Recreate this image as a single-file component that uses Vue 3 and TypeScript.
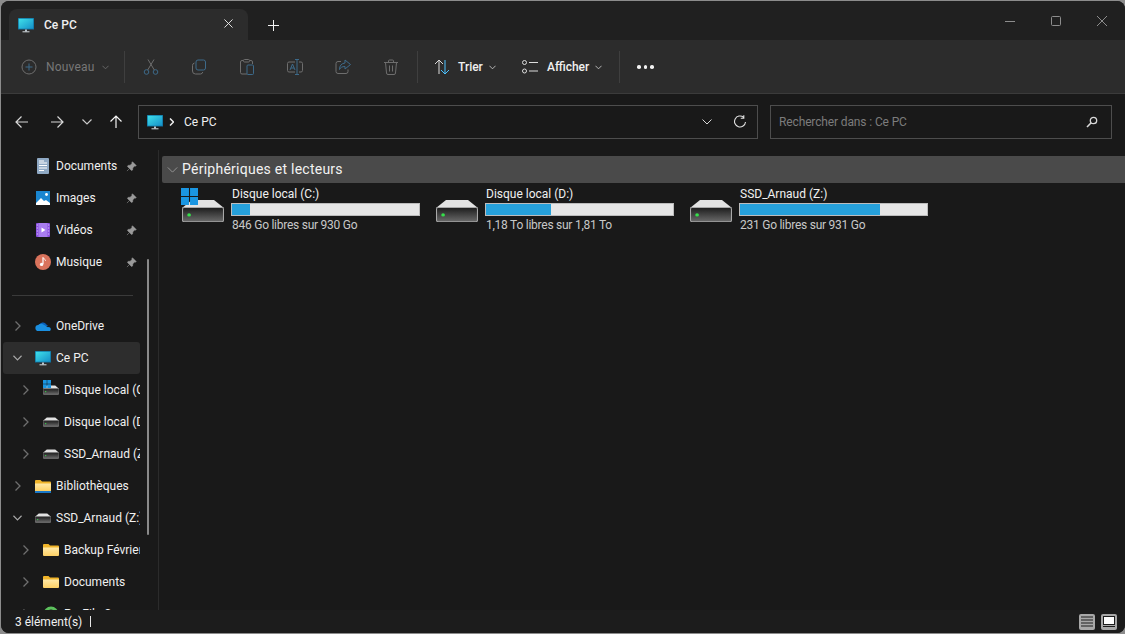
<template>
  <div class="desk">
    <svg class="defs" width="0" height="0">
      <defs>
        <linearGradient id="screen" x1="0" y1="0" x2="1" y2="1">
          <stop offset="0" stop-color="#3fe0ea" />
          <stop offset="1" stop-color="#1590c8" />
        </linearGradient>
        <linearGradient id="driveFront" x1="0" y1="0" x2="0" y2="1">
          <stop offset="0" stop-color="#1c1c1c" />
          <stop offset="1" stop-color="#6a6a6a" />
        </linearGradient>
        <linearGradient id="folder" x1="0" y1="0" x2="0" y2="1">
          <stop offset="0" stop-color="#ffe9a8" />
          <stop offset="1" stop-color="#fdd063" />
        </linearGradient>
        <symbol id="i-monitor" viewBox="0 0 16 16">
          <rect x="0" y="1" width="16" height="11.5" fill="#0e6f9e" />
          <rect x=".7" y="1.7" width="14.6" height="10" fill="url(#screen)" />
          <rect x="7" y="12.5" width="2" height="2" fill="#b8c4cc" />
          <rect x="4.5" y="14.3" width="7" height="1" fill="#d4dade" />
        </symbol>
        <symbol id="i-doc" viewBox="0 0 16 16">
          <rect x="2" y="0" width="12" height="16" rx="1" fill="#8fa9c4" />
          <path d="M4 3h5M4 5h8M4 7.5h8M4 10h8M4 12.5h5" stroke="#fff" stroke-width="1" />
        </symbol>
        <symbol id="i-image" viewBox="0 0 16 16">
          <rect x="1" y="1" width="14" height="14" fill="#1a86d0" />
          <path d="M1 13l5-5 3 3 2-1 4 3v2H1z" fill="#fff" />
          <circle cx="11.5" cy="4.5" r="1.4" fill="#fff" />
        </symbol>
        <symbol id="i-video" viewBox="0 0 16 16">
          <rect x="1" y="1" width="14" height="14" rx="1" fill="#8a4fe0" />
          <rect x="3.5" y="1" width="9" height="14" fill="#a97cf0" />
          <path d="M6.5 5.5l4 2.5-4 2.5z" fill="#fff" />
          <path d="M1.8 3h1M1.8 6h1M1.8 9h1M1.8 12h1M13.2 3h1M13.2 6h1M13.2 9h1M13.2 12h1" stroke="#e8dcff" stroke-width="1" />
        </symbol>
        <symbol id="i-music" viewBox="0 0 16 16">
          <circle cx="8" cy="8" r="8" fill="#d9735c" />
          <path d="M8 3.5v6.5" stroke="#fff" stroke-width="1.2" />
          <path d="M8 3.5c.5 1.5 2.5 1.5 2.5 3.2" stroke="#fff" stroke-width="1" fill="none" />
          <circle cx="6.6" cy="10.4" r="1.7" fill="#fff" />
        </symbol>
        <symbol id="i-cloud" viewBox="0 0 16 16">
          <path d="M4 8a4 4 0 0 1 7.4-1.6A3 3 0 0 1 13 8z" fill="#0a5fb8" />
          <path d="M3.6 13a3 3 0 0 1-.4-6 4 4 0 0 1 5.2-.4L13 9.200a2.200 2.200 0 0 1 2.800 2.300c0 .9-.7 1.500-1.600 1.500z" fill="#1a8fe0" />
        </symbol>
        <symbol id="i-drive" viewBox="0 0 16 16">
          <path d="M3.800 3.500h8.400L16 6.800H0z" fill="#e2e2e2" />
          <rect x=".2" y="6.600" width="15.600" height="5.800" rx=".6" fill="url(#driveFront)" stroke="#a8a8a8" stroke-width=".4" />
          <circle cx="2.700" cy="9.600" r=".7" fill="#35e04a" />
        </symbol>
        <symbol id="i-win" viewBox="0 0 16 16">
          <path d="M0 0h7.500v7.500H0zM8.500 0H16v7.500H8.500zM0 8.500h7.500V16H0zM8.500 8.500H16V16H8.500z" fill="#1a96e2" />
        </symbol>
        <symbol id="i-folder" viewBox="0 0 16 16">
          <path d="M0 3a1 1 0 0 1 1-1h4.500L7 3.500h8a1 1 0 0 1 1 1V8H0z" fill="#f0b429" />
          <path d="M0 5.500h16V13a1 1 0 0 1-1 1H1a1 1 0 0 1-1-1z" fill="url(#folder)" />
        </symbol>
        <symbol id="i-library" viewBox="0 0 16 16">
          <path d="M0 3a1 1 0 0 1 1-1h4.500L7 3.500h8a1 1 0 0 1 1 1V8H0z" fill="#f0b429" />
          <path d="M0 5.500h16V13H0z" fill="url(#folder)" />
          <rect x="0" y="13" width="16" height="2" fill="#1a78c8" />
        </symbol>
        <symbol id="i-gear" viewBox="0 0 16 16">
          <circle cx="8" cy="8" r="6" fill="none" stroke="#5cc05c" stroke-width="3" />
        </symbol>
      </defs>
    </svg>

    <div class="window">
      <header class="titlebar">
        <div class="tab">
          <svg class="ic16"><use href="#i-monitor" /></svg>
          <span class="tab-title">Ce PC</span>
          <svg class="tab-close" viewBox="0 0 10 10"><path d="M.5.500l9 9M9.500.500l-9 9" stroke="#f2f2f2" fill="none" /></svg>
        </div>
        <svg class="tab-add" viewBox="0 0 11 11"><path d="M5.500 0v11M0 5.500h11" stroke="#f2f2f2" fill="none" /></svg>
        <div class="win-controls">
          <svg viewBox="0 0 10 10"><path d="M0 5.500h10" stroke="#8d8d8d" fill="none" /></svg>
          <svg viewBox="0 0 10 10"><rect x=".5" y=".500" width="9" height="9" rx="1" stroke="#8d8d8d" fill="none" /></svg>
          <svg viewBox="0 0 10 10"><path d="M0 0l10 10M10 0L0 10" stroke="#8d8d8d" fill="none" /></svg>
        </div>
      </header>

      <div class="toolbar">
        <div class="tool new">
          <svg class="ic16" viewBox="0 0 16 16">
            <circle cx="8" cy="8" r="7" fill="none" stroke="#6e6e6e" />
            <path d="M8 4.500v7M4.500 8h7" stroke="#3d6a8a" fill="none" />
          </svg>
          <span>Nouveau</span>
          <svg class="chev" viewBox="0 0 8 5"><path d="M.5.500L4 4 7.500.500" stroke="#6e6e6e" fill="none" /></svg>
        </div>
        <i class="sep"></i>
        <div class="icon-tools">
          <div class="icon-tool">
            <svg class="ic16" viewBox="0 0 16 16">
              <circle cx="3.500" cy="13" r="2.300" fill="none" stroke="#3d6a8a" />
              <circle cx="12.500" cy="13" r="2.300" fill="none" stroke="#3d6a8a" />
              <path d="M4.700 11L11 .5M11.300 11L5 .5" stroke="#6e6e6e" fill="none" />
            </svg>
          </div>
          <div class="icon-tool">
            <svg class="ic16" viewBox="0 0 16 16">
              <rect x="5" y="1" width="9.500" height="10" rx="2" fill="none" stroke="#3d6a8a" />
              <path d="M3.500 4A2.500 2.500 0 0 0 1.500 6.500V12a3 3 0 0 0 3 3h5a2.500 2.500 0 0 0 2.300-2" stroke="#6e6e6e" fill="none" />
            </svg>
          </div>
          <div class="icon-tool">
            <svg class="ic16" viewBox="0 0 16 16">
              <path d="M8 15H3a1.500 1.500 0 0 1-1.500-1.500V3A1.500 1.500 0 0 1 3 1.500h1M11 1.500h1A1.500 1.500 0 0 1 13.500 3v2" stroke="#6e6e6e" fill="none" />
              <rect x="4.500" y=".5" width="6" height="2.500" rx="1" stroke="#6e6e6e" fill="none" />
              <rect x="8" y="6" width="6.500" height="9.500" rx="1" stroke="#3d6a8a" fill="none" />
            </svg>
          </div>
          <div class="icon-tool">
            <svg class="ic16" viewBox="0 0 16 16">
              <path d="M8 3H2a1.500 1.500 0 0 0-1.500 1.500v7A1.500 1.500 0 0 0 2 13h6M12 3h2a1.500 1.500 0 0 1 1.500 1.500v7A1.500 1.500 0 0 1 14 13h-2" stroke="#6e6e6e" fill="none" />
              <path d="M10 .5v15M8 .5h4M8 15.500h4" stroke="#3d6a8a" fill="none" />
              <path d="M3 11l2.500-6L8 11M4 9h3" stroke="#3d6a8a" fill="none" />
            </svg>
          </div>
          <div class="icon-tool">
            <svg class="ic16" viewBox="0 0 16 16">
              <path d="M6 2.500H3A2 2 0 0 0 1 4.500v8a2 2 0 0 0 2 2h8a2 2 0 0 0 2-2v-2" stroke="#6e6e6e" fill="none" />
              <path d="M10 1l5.500 4.500L10 10V7.500c-3 0-4.500 1-5.500 3 0-4 2-6 5.500-6.500z" stroke="#3d6a8a" fill="none" />
            </svg>
          </div>
          <div class="icon-tool">
            <svg class="ic16" viewBox="0 0 16 16">
              <path d="M1 3.500h14M5.500 3.500V2A1 1 0 0 1 6.500 1h3a1 1 0 0 1 1 1v1.500M2.500 3.500l1 10.500a1.500 1.500 0 0 0 1.500 1.500h6a1.500 1.500 0 0 0 1.500-1.500l1-10.500M6.500 6.500v6M9.500 6.500v6" stroke="#6e6e6e" fill="none" />
            </svg>
          </div>
        </div>
        <i class="sep"></i>
        <div class="tool sort">
          <svg class="ic16" viewBox="0 0 16 16">
            <path d="M5 15V1M1 5l4-4 4 4" stroke="#dcdcdc" fill="none" />
            <path d="M11 1v14M7 11l4 4 4-4" stroke="#4cc2ff" fill="none" />
          </svg>
          <span>Trier</span>
          <svg class="chev" viewBox="0 0 8 5"><path d="M.5.500L4 4 7.500.500" stroke="#c8c8c8" fill="none" /></svg>
        </div>
        <div class="tool view">
          <svg class="ic16" viewBox="0 0 16 16">
            <circle cx="2.500" cy="3.500" r="2" stroke="#dcdcdc" fill="none" />
            <circle cx="2.500" cy="12" r="2" stroke="#dcdcdc" fill="none" />
            <path d="M7 3.500h9M7 12h9" stroke="#dcdcdc" fill="none" />
          </svg>
          <span>Afficher</span>
          <svg class="chev" viewBox="0 0 8 5"><path d="M.5.500L4 4 7.500.500" stroke="#c8c8c8" fill="none" /></svg>
        </div>
        <i class="sep"></i>
        <div class="dots"><b></b><b></b><b></b></div>
      </div>

      <nav class="navbar">
        <div class="nav-btns">
          <svg viewBox="0 0 14 14"><path d="M13 7H1M6.500 1.500L1 7l5.500 5.500" stroke="#d8d8d8" stroke-width="1.200" fill="none" /></svg>
          <svg viewBox="0 0 14 14"><path d="M1 7h12M7.500 1.500L13 7l-5.500 5.500" stroke="#d8d8d8" stroke-width="1.200" fill="none" /></svg>
          <svg class="nav-small" viewBox="0 0 10 6"><path d="M.5.500L5 5 9.500.500" stroke="#c8c8c8" stroke-width="1.200" fill="none" /></svg>
          <svg viewBox="0 0 14 14"><path d="M7 13V1M1.500 6.500L7 1l5.500 5.500" stroke="#f4f4f4" stroke-width="1.200" fill="none" /></svg>
        </div>
        <div class="address">
          <svg class="ic16"><use href="#i-monitor" /></svg>
          <svg class="crumb" viewBox="0 0 5 8"><path d="M1 .5L4.500 4 1 7.500" stroke="#f0f0f0" stroke-width="1.500" fill="none" /></svg>
          <span class="addr-text">Ce PC</span>
          <svg class="addr-chev" viewBox="0 0 10 6"><path d="M.5.500L5 5 9.500.500" stroke="#d8d8d8" fill="none" /></svg>
          <svg class="addr-refresh" viewBox="0 0 14 14"><path d="M10.500 2.200A5.500 5.500 0 1 0 12.500 7M10.800 .2v3h-3" stroke="#e2e2e2" stroke-width="1.100" fill="none" /></svg>
        </div>
        <div class="search">
          <span>Rechercher dans : Ce PC</span>
          <svg viewBox="0 0 12 12"><circle cx="7.500" cy="4.500" r="3.200" stroke="#d8d8d8" stroke-width="1.300" fill="none" /><path d="M5.200 6.800L1 11" stroke="#d8d8d8" stroke-width="1.600" fill="none" /></svg>
        </div>
      </nav>

      <div class="body">
        <aside class="sidebar">
          <template v-for="row in navRows" :key="row.key">
            <div v-if="row.divider" class="side-div"></div>
            <div v-else class="side-row" :class="{ selected: row.selected, child: row.child, pinned: row.pin }">
              <span class="side-chev">
                <svg v-if="row.open" class="chev-open" viewBox="0 0 10 6"><path d="M.5.500L5 5 9.500.500" stroke="#a8a8a8" stroke-width="1.300" fill="none" /></svg>
                <svg v-else-if="row.chev" class="chev-closed" viewBox="0 0 6 10"><path d="M.5.500L5 5 .5 9.500" stroke="#6f6f6f" stroke-width="1.300" fill="none" /></svg>
              </span>
              <span class="side-icon">
                <svg class="ic16"><use :href="'#i-' + row.icon" /></svg>
                <svg v-if="row.win" class="side-win"><use href="#i-win" /></svg>
              </span>
              <span class="side-label">{{ row.label }}</span>
              <svg v-if="row.pin" class="pin" viewBox="0 0 12 12"><path d="M7 .8l4.200 4.200-1 .6-.8-.2L7.400 7.500 7.200 9.800 6 10.400 1.600 6l.6-1.200 2.300-.2 2.100-2-.2-.8zM3.500 8.500L1 11" fill="#9a9a9a" stroke="#9a9a9a" stroke-width=".6" /></svg>
            </div>
          </template>
          <div class="side-thumb"></div>
        </aside>

        <main class="content">
          <div class="group-head">
            <svg viewBox="0 0 12 7"><path d="M.5.500L6 6 11.500.500" stroke="#9e9e9e" fill="none" /></svg>
            <span>Périphériques et lecteurs</span>
          </div>
          <div class="tiles">
            <div v-for="d in drives" :key="d.name" class="tile">
              <div class="tile-icon">
                <svg class="drive-big" viewBox="0 3.500 16 9" preserveAspectRatio="none"><use href="#i-drive" width="16" height="16" /></svg>
                <svg v-if="d.win" class="drive-win"><use href="#i-win" /></svg>
              </div>
              <div class="tile-info">
                <div class="tile-name">{{ d.name }}</div>
                <div class="bar"><div class="bar-fill" :style="{ width: d.used + '%' }"></div></div>
                <div class="tile-free">{{ d.free }}</div>
              </div>
            </div>
          </div>
        </main>
      </div>

      <footer class="status">
        <span>3 élément(s)</span>
        <i class="status-sep"></i>
        <div class="status-views">
          <div class="view-btn">
            <svg viewBox="0 0 12 10"><path d="M0 .5h12M0 3.500h12M0 6.500h12M0 9.500h12" stroke="#1c1c1c" fill="none" /></svg>
          </div>
          <div class="view-btn">
            <svg viewBox="0 0 12 11"><rect x=".5" y=".5" width="11" height="8" fill="#fff" stroke="#1c1c1c" /><path d="M0 10.500h12" stroke="#1c1c1c" /></svg>
          </div>
        </div>
      </footer>
    </div>
  </div>
</template>

<script setup lang="ts">
interface NavRow {
  key: string
  label?: string
  icon?: string
  chev?: boolean
  open?: boolean
  pin?: boolean
  child?: boolean
  selected?: boolean
  win?: boolean
  divider?: boolean
}

interface Drive {
  name: string
  free: string
  used: number
  win?: boolean
}

const navRows: NavRow[] = [
  { key: 'docs', label: 'Documents', icon: 'doc', pin: true },
  { key: 'img', label: 'Images', icon: 'image', pin: true },
  { key: 'vid', label: 'Vidéos', icon: 'video', pin: true },
  { key: 'mus', label: 'Musique', icon: 'music', pin: true },
  { key: 'div', divider: true },
  { key: 'one', label: 'OneDrive', icon: 'cloud', chev: true },
  { key: 'pc', label: 'Ce PC', icon: 'monitor', open: true, selected: true },
  { key: 'c', label: 'Disque local (C:)', icon: 'drive', chev: true, child: true, win: true },
  { key: 'd', label: 'Disque local (D:)', icon: 'drive', chev: true, child: true },
  { key: 'z', label: 'SSD_Arnaud (Z:)', icon: 'drive', chev: true, child: true },
  { key: 'lib', label: 'Bibliothèques', icon: 'library', chev: true },
  { key: 'ssd', label: 'SSD_Arnaud (Z:)', icon: 'drive', open: true },
  { key: 'bak', label: 'Backup Février', icon: 'folder', chev: true, child: true },
  { key: 'doc2', label: 'Documents', icon: 'folder', chev: true, child: true },
  { key: 'pro', label: 'ProFile Sync', icon: 'gear', chev: true, child: true }
]

const drives: Drive[] = [
  { name: 'Disque local (C:)', free: '846 Go libres sur 930 Go', used: 9.5, win: true },
  { name: 'Disque local (D:)', free: '1,18 To libres sur 1,81 To', used: 35 },
  { name: 'SSD_Arnaud (Z:)', free: '231 Go libres sur 931 Go', used: 75 }
]
</script>

<style>
html,
body {
  margin: 0;
  background: #8c8c8c;
}
</style>

<style scoped>
.desk {
  width: 1125px;
  height: 634px;
  padding: 1px 0 1px 1px;
  box-sizing: border-box;
  overflow: hidden;
  position: relative;
  font-family: Roboto, "Noto Sans", sans-serif;
  font-size: 12px;
  color: #f0f0f0;
}

.defs {
  position: absolute;
}

.window {
  height: 100%;
  display: flex;
  flex-direction: column;
  background: #191919;
  border-radius: 8px;
  overflow: hidden;
}

.ic16 {
  width: 16px;
  height: 16px;
  flex: none;
}

.chev {
  width: 7px;
  height: 5px;
  flex: none;
}

/* title bar */
.titlebar {
  height: 39px;
  flex: none;
  background: #202020;
  display: flex;
  align-items: flex-end;
  padding-left: 8px;
}

.tab {
  width: 239px;
  height: 31px;
  box-sizing: border-box;
  background: #2c2c2c;
  border-radius: 8px 8px 0 0;
  display: flex;
  align-items: center;
  padding: 0 15px 0 9px;
}

.tab-title {
  margin-left: 10px;
  font-weight: 500;
  flex: 1;
}

.tab-close {
  width: 9px;
  height: 9px;
  margin-top: -3px;
}

.tab-add {
  width: 11px;
  height: 11px;
  margin: 0 0 9px 20px;
}

.win-controls {
  margin-left: auto;
  align-self: flex-start;
  display: flex;
  gap: 36px;
  padding: 15px 18px 0 0;
}

.win-controls svg {
  width: 10px;
  height: 10px;
}

/* toolbar */
.toolbar {
  height: 54px;
  flex: none;
  box-sizing: border-box;
  background: #2c2c2c;
  border-bottom: 1px solid #3b3b3b;
  display: flex;
  align-items: center;
  padding: 1px 0 0 20px;
}

.sep {
  width: 1px;
  height: 32px;
  background: #3f3f3f;
  flex: none;
}

.tool {
  display: flex;
  align-items: center;
}

.new {
  width: 103px;
  color: #777;
}

.new span {
  margin: 0 7px 0 9px;
  letter-spacing: 0.2px;
}

.icon-tools {
  display: flex;
  margin: 0 2px;
}

.icon-tool {
  width: 48px;
  display: flex;
  justify-content: center;
}

.sort {
  margin-left: 16px;
  width: 88px;
}

.sort span,
.view span {
  margin: 0 6px 0 8px;
  font-weight: 500;
}

.view {
  width: 97px;
}

.view span {
  margin-left: 9px;
}

.dots {
  display: flex;
  gap: 3px;
  margin-left: 17px;
}

.dots b {
  width: 3.5px;
  height: 3.5px;
  border-radius: 50%;
  background: #f2f2f2;
}

/* nav bar */
.navbar {
  height: 56px;
  flex: none;
  display: flex;
  align-items: flex-start;
  padding-top: 11px;
  box-sizing: border-box;
}

.nav-btns {
  width: 137px;
  height: 33px;
  flex: none;
  box-sizing: border-box;
  padding-left: 14px;
  display: flex;
  align-items: center;
}

.nav-btns svg {
  width: 14px;
  height: 14px;
  flex: none;
}

.nav-btns svg:nth-child(1) {
  margin-right: 21px;
}

.nav-btns svg:nth-child(2) {
  margin-right: 18px;
}

.nav-btns .nav-small {
  width: 10px;
  height: 6px;
  margin-right: 17px;
}

.address {
  width: 620px;
  height: 34px;
  box-sizing: border-box;
  border: 1px solid #4d4d4d;
  display: flex;
  align-items: center;
  padding: 0 10px 0 8px;
}

.crumb {
  width: 5px;
  height: 8px;
  margin: 0 0 0 6px;
}

.addr-text {
  margin-left: 10px;
  flex: 1;
}

.addr-chev {
  width: 10px;
  height: 6px;
  margin-right: 21px;
}

.addr-refresh {
  width: 14px;
  height: 14px;
}

.search {
  width: 342px;
  height: 34px;
  margin-left: 12px;
  box-sizing: border-box;
  border: 1px solid #4d4d4d;
  display: flex;
  align-items: center;
  justify-content: space-between;
  padding: 0 13px 0 8px;
  color: #7c7c7c;
  letter-spacing: -0.13px;
}

.search svg {
  width: 12px;
  height: 12px;
}

/* body */
.body {
  flex: 1;
  min-height: 0;
  display: flex;
}

.sidebar {
  width: 158px;
  flex: none;
  box-sizing: border-box;
  border-right: 1px solid #2b2b2b;
  position: relative;
  overflow: hidden;
  padding-left: 2px;
}

.side-row {
  height: 32px;
  width: 137px;
  display: flex;
  align-items: center;
  border-radius: 3px;
  overflow: hidden;
  white-space: nowrap;
}

.side-row.selected {
  background: #2d2d2d;
}

.side-chev {
  width: 29px;
  flex: none;
  box-sizing: border-box;
  display: flex;
  justify-content: center;
}

.side-row.child .side-chev {
  width: 38px;
  padding-left: 7px;
}

.chev-open {
  width: 9px;
  height: 6px;
}

.chev-closed {
  width: 6px;
  height: 10px;
}

.side-icon {
  width: 16px;
  height: 16px;
  flex: none;
  position: relative;
  margin-left: 3px;
}

.side-row.child .side-icon {
  margin-left: 2px;
}

.side-win {
  position: absolute;
  left: 0;
  top: -2px;
  width: 8px;
  height: 8px;
}

.side-label {
  margin-left: 5px;
  flex: 1;
  min-width: 0;
  overflow: hidden;
}

.pin {
  width: 11px;
  height: 11px;
  flex: none;
  margin-right: 3px;
}

.side-div {
  height: 1px;
  width: 121px;
  margin: 17px 0 14px 9px;
  background: #3a3a3a;
}

.side-thumb {
  position: absolute;
  left: 146px;
  top: 109px;
  width: 2px;
  height: 276px;
  background: #8a8a8a;
  border-radius: 1px;
}

/* content */
.content {
  flex: 1;
  min-width: 0;
  padding: 6px 0 0 3px;
}

.group-head {
  height: 27px;
  background: #4a4a4a;
  border-radius: 2px 0 0 2px;
  display: flex;
  align-items: center;
  padding-left: 5px;
  font-size: 14px;
  color: #f2f2f2;
}

.group-head span {
  letter-spacing: 0.25px;
  margin-top: -2px;
}

.group-head svg {
  width: 11px;
  height: 6px;
  margin-right: 4px;
}

.tiles {
  display: flex;
  padding: 5px 0 0 20px;
}

.tile {
  width: 254px;
  display: flex;
}

.tile-icon {
  position: relative;
  width: 42px;
  height: 42px;
  flex: none;
}

.drive-big {
  position: absolute;
  left: 0;
  top: 12px;
  width: 42px;
  height: 22px;
}

.drive-win {
  position: absolute;
  left: -1px;
  top: 0;
  width: 17px;
  height: 17px;
}

.tile-info {
  margin-left: 7px;
  width: 189px;
}

.tile-name {
  height: 15px;
  line-height: 13px;
  padding-left: 1px;
  white-space: nowrap;
}

.bar {
  height: 13px;
  box-sizing: border-box;
  background: #e6e6e6;
  border: 1px solid #bcbcbc;
}

.bar-fill {
  height: 100%;
  background: #26a0da;
}

.tile-free {
  margin-top: 2px;
  padding-left: 1px;
  color: #c8c8c8;
  white-space: nowrap;
  letter-spacing: -0.25px;
}

/* status bar */
.status {
  height: 23px;
  flex: none;
  background: #1c1c1c;
  display: flex;
  align-items: center;
  padding: 0 8px 0 14px;
}

.status-sep {
  width: 1px;
  height: 11px;
  background: #e8e8e8;
  margin-left: 8px;
}

.status-views {
  margin-left: auto;
  display: flex;
  gap: 6px;
}

.view-btn {
  width: 16px;
  height: 16px;
  background: #a8a8a8;
  border-radius: 2px;
  display: flex;
  align-items: center;
  justify-content: center;
}

.view-btn svg {
  width: 12px;
  height: 11px;
}
</style>
